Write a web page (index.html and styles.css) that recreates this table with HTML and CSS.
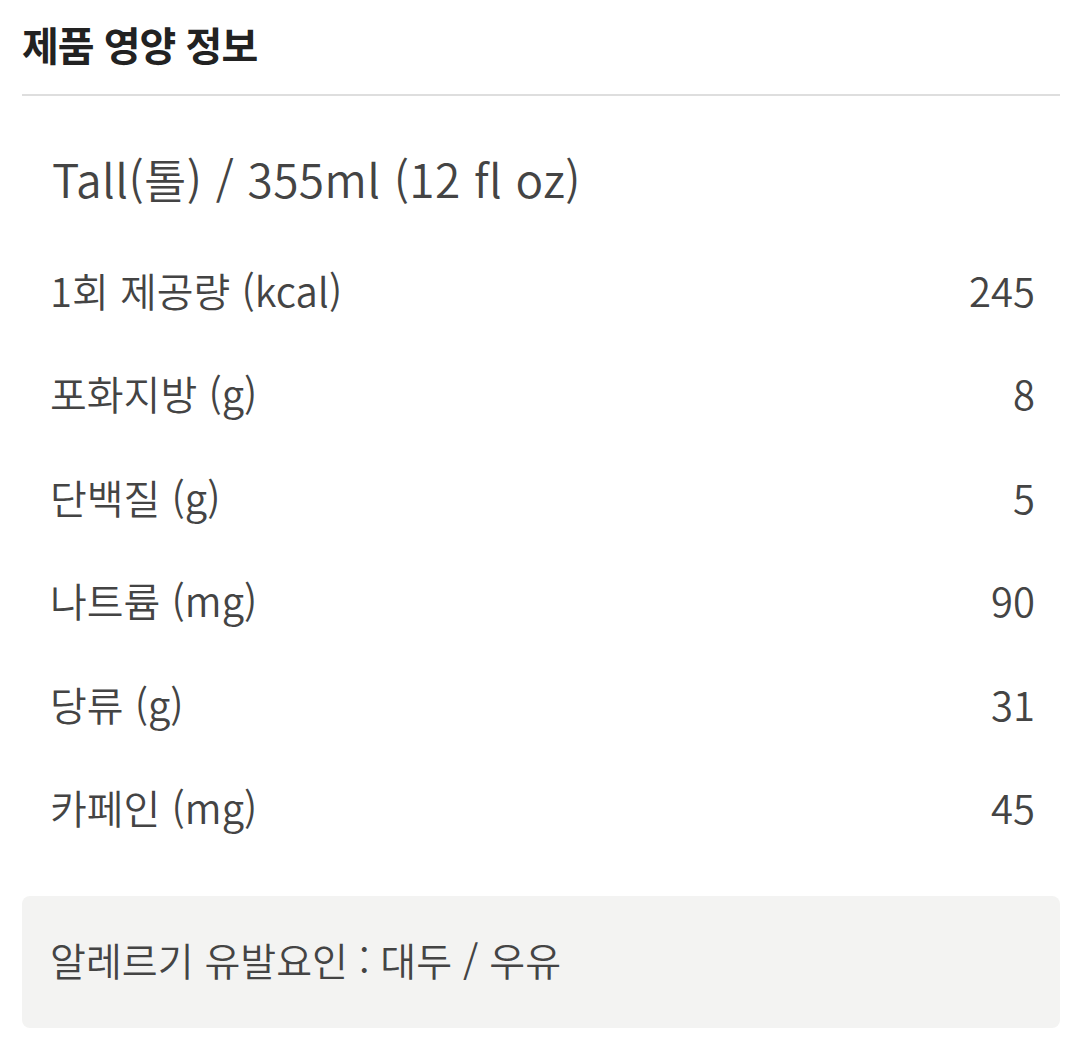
FILE: index.html
```html
<!DOCTYPE html>
<html lang="ko">
<head>
<meta charset="utf-8">
<link rel="stylesheet" href="styles.css">
</head>
<body>
<div class="page">
  <h2 class="title">제품 영양 정보</h2>
  <div class="divider"></div>
  <div class="size">Tall(톨) / 355ml (12 fl oz)</div>
  <ul class="rows">
    <li class="row"><span>1회 제공량 (kcal)</span><span>245</span></li>
    <li class="row"><span>포화지방 (g)</span><span>8</span></li>
    <li class="row"><span>단백질 (g)</span><span>5</span></li>
    <li class="row"><span>나트륨 (mg)</span><span>90</span></li>
    <li class="row"><span>당류 (g)</span><span>31</span></li>
    <li class="row"><span>카페인 (mg)</span><span>45</span></li>
  </ul>
  <div class="allergy">알레르기 유발요인 : 대두 / 우유</div>
</div>
</body>
</html>
```

FILE: styles.css
```css
html, body {
  margin: 0;
  padding: 0;
  background: #fff;
}
body {
  font-family: "Noto Sans CJK KR", "Noto Sans", sans-serif;
  color: #444;
}
.page {
  padding: 0 20px 0 22px;
}
.title {
  margin: 0;
  padding-top: 14px;
  font-size: 40px;
  font-weight: 700;
  color: #222;
  line-height: 60px;
  letter-spacing: -1px;
}
.divider {
  height: 2px;
  background: #dedede;
  margin-top: 20px;
}
.size {
  padding: 52px 0 0 30px;
  font-size: 46px;
  line-height: 60px;
  font-weight: 350;
  color: #444;
  letter-spacing: 0.4px;
}
.rows {
  list-style: none;
  margin: 0;
  padding: 30px 25px 0 28px;
}
.row {
  display: flex;
  justify-content: space-between;
  align-items: center;
  height: 103.5px;
  font-size: 40px;
  font-weight: 350;
  color: #444;
}
.allergy {
  margin-top: 37px;
  background: #f3f3f2;
  border-radius: 8px;
  height: 132px;
  box-sizing: border-box;
  padding: 0 0 6px 28px;
  display: flex;
  align-items: center;
  font-size: 39px;
  font-weight: 350;
  color: #444;
}
```
